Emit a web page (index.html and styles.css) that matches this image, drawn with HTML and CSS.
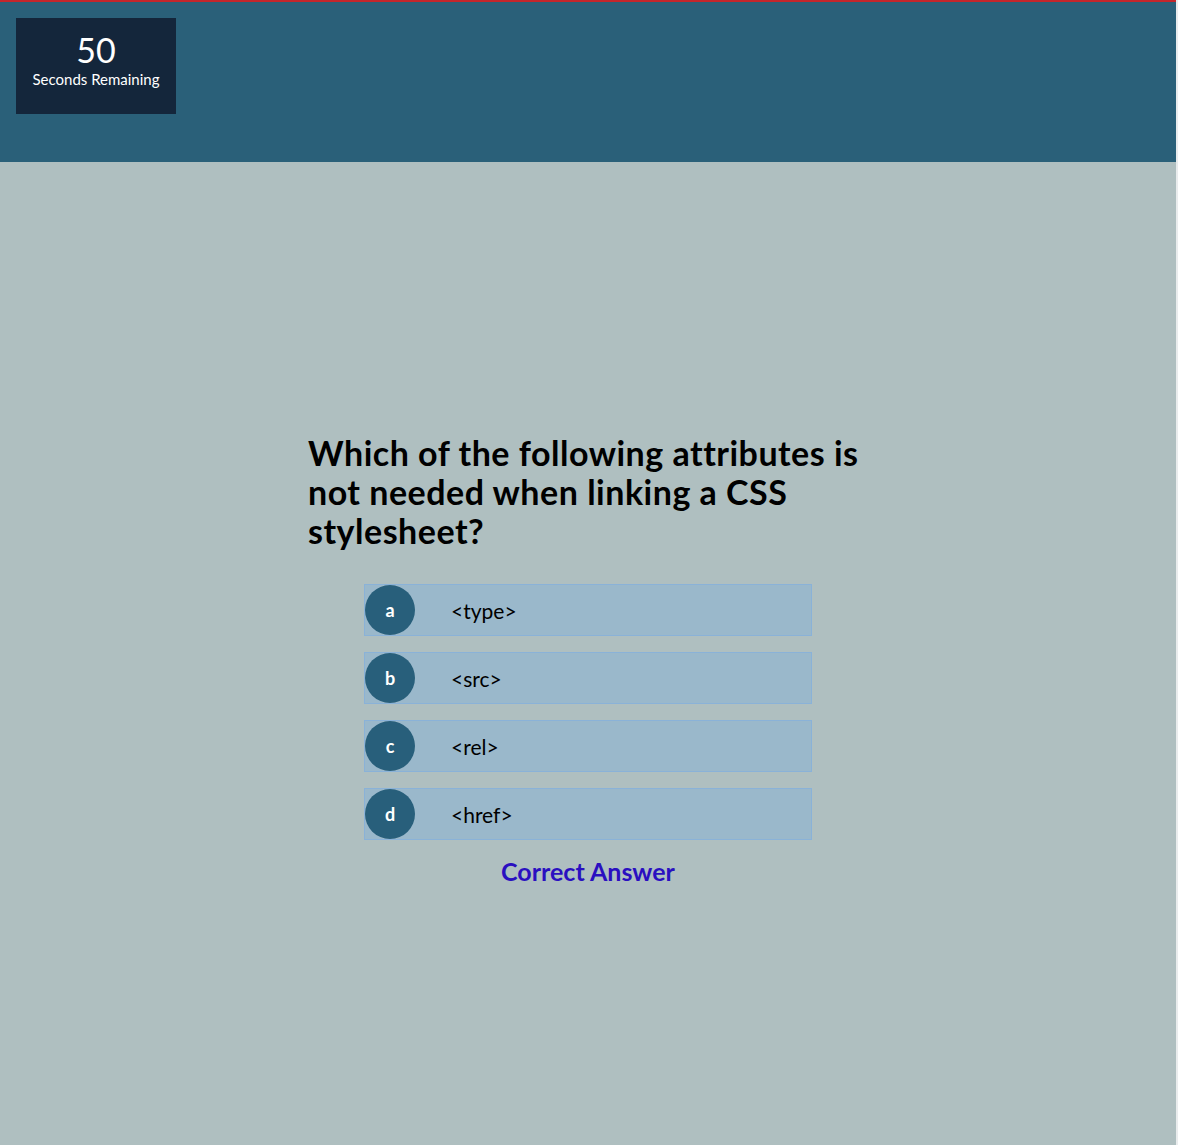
FILE: index.html
```html
<!DOCTYPE html>
<html lang="en">
<head>
<meta charset="utf-8">
<title>Quiz</title>
<link rel="stylesheet" href="styles.css">
</head>
<body>
<div class="page">
  <header class="header">
    <div class="timer">
      <div class="timer-num">50</div>
      <div class="timer-label">Seconds Remaining</div>
    </div>
  </header>
  <main class="main">
    <section class="quiz">
      <h1 class="question">Which of the following attributes is not needed when linking a CSS stylesheet?</h1>
      <ul class="options">
        <li class="option"><span class="letter">a</span><span class="text">&lt;type&gt;</span></li>
        <li class="option"><span class="letter">b</span><span class="text">&lt;src&gt;</span></li>
        <li class="option"><span class="letter">c</span><span class="text">&lt;rel&gt;</span></li>
        <li class="option"><span class="letter">d</span><span class="text">&lt;href&gt;</span></li>
      </ul>
      <div class="result">Correct Answer</div>
    </section>
  </main>
</div>
</body>
</html>
```

FILE: styles.css
```css
html, body {
  margin: 0;
  padding: 0;
}
body {
  background: #e9eced;
  font-family: "Lato", "Open Sans", sans-serif;
}
.page {
  margin-right: 2px;
  min-height: 1145px;
  background: #afbfc0;
  display: flex;
  flex-direction: column;
}
.header {
  background: #2a6079;
  border-top: 2px solid #c4262b;
  padding: 16px;
  box-sizing: border-box;
  height: 162px;
}
.timer {
  width: 160px;
  height: 96px;
  background: #14263b;
  color: #fff;
  display: flex;
  flex-direction: column;
  align-items: center;
  padding-top: 14px;
  box-sizing: border-box;
}
.timer-num {
  font-size: 34px;
  line-height: 36px;
}
.timer-label {
  font-size: 15px;
  line-height: 20px;
  margin-top: 1px;
}
.main {
  display: flex;
  justify-content: center;
  padding-top: 271px;
}
.quiz {
  width: 560px;
  display: flex;
  flex-direction: column;
  align-items: center;
}
.question {
  margin: 0;
  align-self: stretch;
  font-size: 34px;
  line-height: 39px;
  letter-spacing: 0.5px;
  font-weight: 700;
  color: #000;
}
.options {
  list-style: none;
  margin: 34px 0 0;
  padding: 0;
  width: 448px;
  display: flex;
  flex-direction: column;
  gap: 16px;
}
.option {
  height: 52px;
  box-sizing: border-box;
  background: #9ab8cb;
  border: 1px solid #8ab2d8;
  display: flex;
  align-items: center;
}
.letter {
  width: 50px;
  height: 50px;
  border-radius: 50%;
  background: #285f7b;
  color: #fff;
  display: flex;
  align-items: center;
  justify-content: center;
  font-size: 18px;
  font-weight: 700;
}
.text {
  margin-left: 36px;
  font-size: 21px;
  color: #000;
}
.result {
  margin-top: 16px;
  font-size: 25px;
  font-weight: 700;
  color: #2a0fc0;
}
```
